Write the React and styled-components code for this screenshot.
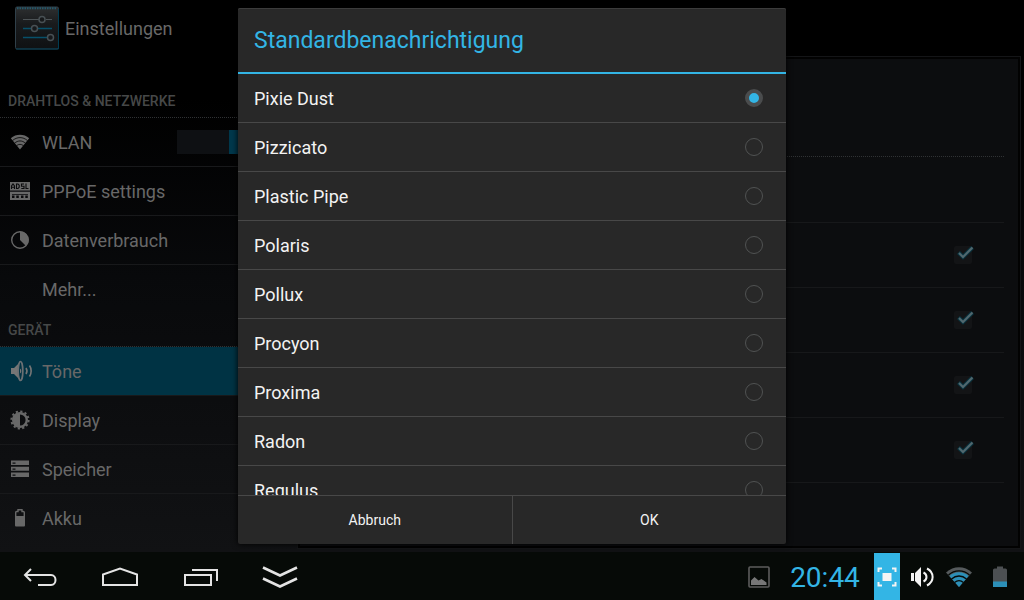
import React, { useState } from "react";
import styled, { createGlobalStyle, css } from "styled-components";

const GlobalStyle = createGlobalStyle`
  *, *::before, *::after { box-sizing: border-box; }
  body {
    margin: 0;
    background: #000;
    font-family: Roboto, "Liberation Sans", sans-serif;
  }
  button, input { font: inherit; margin: 0; }
`;

const Device = styled.div`
  display: flex;
  flex-direction: column;
  height: 100vh;
  overflow: hidden;
`;

const Screen = styled.div`
  position: relative;
  flex: 1;
  min-height: 0;
  display: flex;
  flex-direction: column;
  background: linear-gradient(#000 0%, #000 18%, #08090b 50%, #111214 100%);
`;

const ActionBar = styled.header`
  display: flex;
  align-items: center;
  gap: 6px;
  height: 56px;
  padding: 0 15px;
  color: #686868;
  svg { display: block; }
`;

const AppTitle = styled.h1`
  margin: 0;
  padding-top: 2px;
  font-size: 18px;
  line-height: 24px;
  font-weight: 400;
`;

const Body = styled.div`
  flex: 1;
  min-height: 0;
  display: flex;
`;

const Sidebar = styled.nav`
  flex: 0 0 29%;
  overflow: hidden;
  padding-top: 29px;
`;

const SectionTitle = styled.h2`
  height: 33px;
  margin: 0;
  padding: 0 8px;
  border-bottom: 1px dotted #303234;
  color: #464848;
  font-size: 14px;
  line-height: 33px;
  font-weight: 500;
`;

const ItemList = styled.ul`
  list-style: none;
  margin: 0;
  padding: 0;
`;

const Item = styled.li`
  display: flex;
  align-items: center;
  height: 49px;
  padding-right: 24px;
  border-bottom: 1px solid #18191b;
  color: #686868;
  &:last-child { border-bottom-color: transparent; }
  ${(p) => p.$active && css`background: #003344;`}
`;

const ItemLink = styled.a`
  flex: 1;
  display: flex;
  align-items: center;
  gap: 12px;
  height: 100%;
  padding-left: 10px;
  color: inherit;
  font-size: 18px;
  text-decoration: none;
  svg { display: block; flex: none; overflow: visible; }
`;

const Switch = styled.input`
  appearance: none;
  width: 96px;
  height: 24px;
  background: linear-gradient(90deg, #0e1013 52px, #00384c 52px);
`;

const Panel = styled.main`
  flex: 1;
  display: flex;
  margin: 0 3px 3px 0;
  padding: 2px;
  border: 1px solid #141517;
  background: #020202;
`;

const PanelBody = styled.div`
  flex: 1;
  padding: 0 14px 0 16px;
  background: #0c0d0f;
`;

const Setting = styled.div`
  display: flex;
  align-items: center;
  justify-content: flex-end;
  height: 65px;
  padding-right: 32px;
  border-bottom: 1px solid #17181a;
`;

const LeadSetting = styled(Setting)`
  height: 98px;
  border-bottom: 1px dotted #303234;
`;

const PlainSetting = styled(Setting)`
  height: 66px;
`;

const CheckWrap = styled.span`
  display: grid;
  width: 18px;
  height: 18px;
  svg {
    grid-area: 1 / 1;
    overflow: visible;
    pointer-events: none;
  }
`;

const CheckBox = styled.input`
  grid-area: 1 / 1;
  appearance: none;
  width: 18px;
  height: 18px;
  border-radius: 2px;
  background: #131416;
`;

const Overlay = styled.div`
  position: absolute;
  inset: 0;
  display: flex;
  align-items: center;
  justify-content: center;
  padding: 8px;
`;

const Dialog = styled.form`
  display: flex;
  flex-direction: column;
  width: 548px;
  max-width: 100%;
  max-height: 100%;
  overflow: hidden;
  border-radius: 2px;
  background: #282828;
  box-shadow: 0 0 6px #000, inset 0 1px #3c3c3c;
`;

const DialogTitle = styled.h2`
  flex: none;
  height: 66px;
  margin: 0;
  padding: 0 16px;
  border-bottom: 2px solid #33b5e5;
  color: #33b5e5;
  font-size: 23px;
  line-height: 66px;
  font-weight: 400;
`;

const Options = styled.div`
  flex: 1 1 auto;
  min-height: 0;
  overflow: hidden auto;
  scrollbar-width: none;
`;

const Option = styled.label`
  display: flex;
  align-items: center;
  justify-content: space-between;
  height: 49px;
  padding: 0 23px 0 16px;
  border-bottom: 1px solid #484848;
  color: #f3f3f3;
  font-size: 18px;
`;

const Radio = styled.input`
  appearance: none;
  width: 18px;
  height: 18px;
  border: 1px solid #505252;
  border-radius: 50%;
  &:checked {
    border: 4px solid #4a4c4d;
    background: #33b5e5;
  }
`;

const Actions = styled.div`
  flex: none;
  display: flex;
  height: 49px;
  border-top: 1px solid #484848;
`;

const ActionButton = styled.button`
  flex: 1;
  border: 0;
  background: none;
  color: #f3f3f3;
  font-size: 14px;
  & + & { border-left: 1px solid #484848; }
`;

const SystemBar = styled.footer`
  flex: none;
  display: flex;
  justify-content: space-between;
  height: 48px;
  background: #060a07;
`;

const BarGroup = styled.div`
  display: flex;
  align-items: center;
`;

const NavButton = styled.button`
  display: grid;
  place-items: center;
  width: 80px;
  height: 48px;
  padding: 0;
  border: 0;
  background: none;
  svg { display: block; }
`;

const StatusGroup = styled(BarGroup)`
  padding-right: 2px;
`;

const StatusSlot = styled.span`
  display: grid;
  place-items: center;
  width: ${(p) => p.$width}px;
  padding-top: 2px;
  svg { display: block; }
`;

const Clock = styled.time`
  width: 90px;
  padding-top: 2px;
  color: #33b5e5;
  font-size: 28px;
  text-align: center;
`;

const FullscreenButton = styled.button`
  align-self: flex-end;
  display: grid;
  place-items: center;
  width: 26px;
  height: 47px;
  margin: 0 4px;
  padding: 0;
  border: 0;
  background: #33b5e5;
  svg { display: block; }
`;

const Icon = ({ w = 20, h = 20, children, ...rest }) => (
  <svg width={w} height={h} viewBox={`0 0 ${w} ${h}`} aria-hidden="true" {...rest}>
    {children}
  </svg>
);

const SettingsLogo = () => (
  <Icon w={44} h={44}>
    <defs>
      <linearGradient id="tile" x1="0" y1="0" x2="0" y2="1">
        <stop offset="0" stopColor="#2d2f30" />
        <stop offset="0.4" stopColor="#191b1d" />
        <stop offset="1" stopColor="#0f1113" />
      </linearGradient>
    </defs>
    <rect x="0.5" y="1" width="43" height="42" rx="1.5" fill="url(#tile)" stroke="#30404a" />
    <path d="M1 43h42.5V3" fill="none" stroke="#003c52" />
    <path d="M2 2.2h40" stroke="#24586b" strokeWidth="2" strokeDasharray="1.5 1" />
    <path d="M8 13.500h16M31 13.500h6" stroke="#4d5356" />
    <path d="M8 22.500h9M23 22.500h14M8 31.500h24" stroke="#07506a" strokeWidth="1.4" />
    <g fill="#17191b" stroke="#485054" strokeWidth="1.5">
      <circle cx="27" cy="13.500" r="3" />
      <circle cx="19.500" cy="22.500" r="3" />
      <circle cx="35.500" cy="31.500" r="3" />
    </g>
  </Icon>
);

const WifiFan = ({ bg }) => (
  <Icon>
    <path d="M10 17.500 0.800 6.200C6 1.600 14 1.600 19.200 6.200Z" fill="#686868" />
    <g fill="none" stroke={bg} strokeWidth="0.800">
      <path d="M2.500 8.600c4.500-4 10.500-4 15 0" />
      <path d="M4.500 11.200c3.500-3 7.500-3 11 0" />
      <path d="M6.500 13.700c2.200-1.800 4.800-1.800 7 0" />
    </g>
  </Icon>
);

const AdslIcon = () => (
  <Icon>
    <path fill="#686868" d="M0 1h20v18H0z" />
    <path
      d="M1.500 8V5l1.500-2 1.500 2v3M1.500 6.200h3M6.500 3v4.500H8L9.200 6.300V4.200L8 3zM14 3h-2.500v2.200H14v2.300h-2.700M16 2.500v5h2.500"
      fill="none"
      stroke="#0a0a0c"
      strokeWidth="1.100"
    />
    <path fill="#0a0a0c" d="M0 9.500h20v1.300H0zM2 13h16v.8H2zM2 14.500h2.500v2.500H2zM6.300 14.500h2.500v2.500H6.300zM11 14.500h2.500v2.500H11zM15.300 14.500h2.500v2.500h-2.500z" />
  </Icon>
);

const DataIcon = () => (
  <Icon>
    <circle cx="10" cy="10" r="8.300" fill="none" stroke="#686868" strokeWidth="1.400" />
    <path d="M10 10V1.500a8.500 8.500 0 0 1 6 14.500z" fill="#686868" />
  </Icon>
);

const SoundIcon = () => (
  <Icon>
    <path d="M1 7h3l5-5v16l-5-5H1z" fill="#767676" />
    <ellipse cx="10.500" cy="10" rx="2.300" ry="9.500" fill="none" stroke="#6b7073" strokeWidth="1.700" />
    <path d="M10 7.500c1.800 1 1.800 4 0 5" fill="#767676" />
    <path d="M16 7c1.300 2 1.300 4 0 6M19.500 4.500c2.200 3 2.200 8 0 11" fill="none" stroke="#767676" strokeWidth="1.600" />
  </Icon>
);

const DisplayIcon = () => (
  <Icon>
    <circle cx="10" cy="10" r="8.600" fill="none" stroke="#686868" strokeWidth="2" strokeDasharray="2.200 2.300" />
    <circle cx="10" cy="10" r="6.800" fill="none" stroke="#686868" strokeWidth="2.400" />
    <path d="M10 3.500a6.500 6.500 0 0 0 0 13z" fill="#686868" />
  </Icon>
);

const StorageIcon = () => (
  <Icon>
    <path fill="#686868" d="M1 1.500h18v4.500H1zM1 7.800h18v4H1zM1 13.500h18V18H1z" />
    <path fill="#0d0e10" d="M2.500 3.500h3v1.200h-3zM2.500 9.500h3v1.200h-3zM2.500 15.500h3v1.200h-3z" />
  </Icon>
);

const BatteryIcon = () => (
  <Icon>
    <path fill="#686868" d="M5 8h10v9.500q0 1-1 1H6q-1 0-1-1z" />
    <path d="M5.700 8V4.500q0-1 1-1H8V1.800h4v1.700h1.300q1 0 1 1V8" fill="none" stroke="#686868" strokeWidth="1.400" />
  </Icon>
);

const CheckMark = () => (
  <Icon w={18} h={18}>
    <path d="M4.500 6.500 9 11l9.500-9.500" fill="none" stroke="#093440" strokeWidth="4" />
    <path d="M5 7l4 4 9.500-9.500" fill="none" stroke="#52686f" strokeWidth="2" />
  </Icon>
);

const NavIcon = ({ d, width = 2 }) => (
  <Icon w={40} h={24}>
    <path d={d} fill="none" stroke="#e4e4e4" strokeWidth={width} />
  </Icon>
);

const navButtons = [
  { label: "Zurück", d: "M5 11h26c6 0 6 10 0 10H18M11 5l-6 6 6 6" },
  { label: "Startseite", d: "M3 21V10.500l17-6 17 6V21z" },
  { label: "Letzte Apps", d: "M5 11h26v10H5zM12 6h25v11" },
  { label: "Leiste ausblenden", d: "M3 3.500l17 8 17-8M3 14.500l17 8 17-8", width: 2.6 },
];

const sections = [
  {
    title: "DRAHTLOS & NETZWERKE",
    items: [
      { label: "WLAN", icon: <WifiFan bg="#020203" />, toggle: true },
      { label: "PPPoE settings", icon: <AdslIcon /> },
      { label: "Datenverbrauch", icon: <DataIcon /> },
      { label: "Mehr...", icon: <Icon /> },
    ],
  },
  {
    title: "GERÄT",
    items: [
      { label: "Töne", icon: <SoundIcon />, active: true },
      { label: "Display", icon: <DisplayIcon /> },
      { label: "Speicher", icon: <StorageIcon /> },
      { label: "Akku", icon: <BatteryIcon /> },
    ],
  },
];

const tones = [
  "Pixie Dust",
  "Pizzicato",
  "Plastic Pipe",
  "Polaris",
  "Pollux",
  "Procyon",
  "Proxima",
  "Radon",
  "Regulus",
];

const soundSettings = ["Wähltastentöne", "Touch-Töne", "Display-Sperrtöne", "Vibration"];

export default function App() {
  const [tone, setTone] = useState("Pixie Dust");

  return (
    <Device>
      <GlobalStyle />
      <Screen>
        <ActionBar>
          <SettingsLogo />
          <AppTitle>Einstellungen</AppTitle>
        </ActionBar>
        <Body>
          <Sidebar>
            {sections.map((section) => (
              <section key={section.title}>
                <SectionTitle>{section.title}</SectionTitle>
                <ItemList>
                  {section.items.map((item) => (
                    <Item key={item.label} $active={item.active}>
                      <ItemLink href="#">
                        {item.icon}
                        {item.label}
                      </ItemLink>
                      {item.toggle && <Switch type="checkbox" role="switch" defaultChecked aria-label={item.label} />}
                    </Item>
                  ))}
                </ItemList>
              </section>
            ))}
          </Sidebar>
          <Panel>
            <PanelBody>
              <LeadSetting />
              <PlainSetting />
              {soundSettings.map((name) => (
                <Setting key={name}>
                  <CheckWrap>
                    <CheckBox type="checkbox" defaultChecked aria-label={name} />
                    <CheckMark />
                  </CheckWrap>
                </Setting>
              ))}
            </PanelBody>
          </Panel>
        </Body>
        <Overlay>
          <Dialog role="dialog" aria-labelledby="dialog-title" onSubmit={(e) => e.preventDefault()}>
            <DialogTitle id="dialog-title">Standardbenachrichtigung</DialogTitle>
            <Options>
              {tones.map((name) => (
                <Option key={name}>
                  {name}
                  <Radio
                    type="radio"
                    name="tone"
                    value={name}
                    checked={tone === name}
                    onChange={() => setTone(name)}
                  />
                </Option>
              ))}
            </Options>
            <Actions>
              <ActionButton type="button">Abbruch</ActionButton>
              <ActionButton type="submit">OK</ActionButton>
            </Actions>
          </Dialog>
        </Overlay>
      </Screen>
      <SystemBar>
        <BarGroup>
          {navButtons.map((b) => (
            <NavButton key={b.label} type="button" aria-label={b.label}>
              <NavIcon d={b.d} width={b.width} />
            </NavButton>
          ))}
        </BarGroup>
        <StatusGroup>
          <StatusSlot $width={42}>
            <Icon w={22} h={22}>
              <rect x="1" y="1" width="20" height="20" rx="1" fill="none" stroke="#5c5c5c" strokeWidth="1.600" />
              <path d="M3 19v-4.500l3.500-3.500 4 3.500 3-1.500 5 3.500V19z" fill="#777" />
            </Icon>
          </StatusSlot>
          <Clock>20:44</Clock>
          <FullscreenButton type="button" aria-label="Vollbild">
            <Icon w={20} h={20}>
              <path d="M5 1.500H1.500V5M15 1.500h3.500V5M5 18.500H1.500V15M15 18.500h3.500V15" fill="none" stroke="#f4f4f4" strokeWidth="2" />
              <path d="M5.500 6h9v8h-9z" fill="#f4f4f4" />
            </Icon>
          </FullscreenButton>
          <StatusSlot $width={36}>
            <Icon w={24} h={22}>
              <path d="M1 7h3v8H1zM5 7l6-6v20l-6-6z" fill="#f4f4f4" />
              <path d="M13.500 6.500c4 2 4 7 0 9M17 2.500c7.500 4 7.500 13 0 17" fill="none" stroke="#f4f4f4" strokeWidth="2" />
            </Icon>
          </StatusSlot>
          <StatusSlot $width={38}>
            <Icon w={26} h={22}>
              <path d="M13 21 0 6.500C7.500-.6 18.500-.6 26 6.500Z" fill="#555a5c" />
              <path d="M13 21 3.500 10C9 5 17 5 22.500 10Z" fill="#2c90b8" />
              <g fill="none" stroke="#060a07" strokeWidth="1.300">
                <path d="M2.500 9c6-5.500 15-5.500 21 0" />
                <path d="M5.500 13c4.500-4 10.500-4 15 0" />
                <path d="M8.500 16.500c2.700-2.300 6.300-2.300 9 0" />
              </g>
            </Icon>
          </StatusSlot>
          <StatusSlot $width={44}>
            <Icon w={14} h={22}>
              <path d="M0 4q0-1.500 1.500-1.500H4V.5h6v2h2.500Q14 2.500 14 4v12H0z" fill="#4c5052" />
              <path d="M0 15.500h14V21H0z" fill="#2c90b8" />
            </Icon>
          </StatusSlot>
        </StatusGroup>
      </SystemBar>
    </Device>
  );
}
